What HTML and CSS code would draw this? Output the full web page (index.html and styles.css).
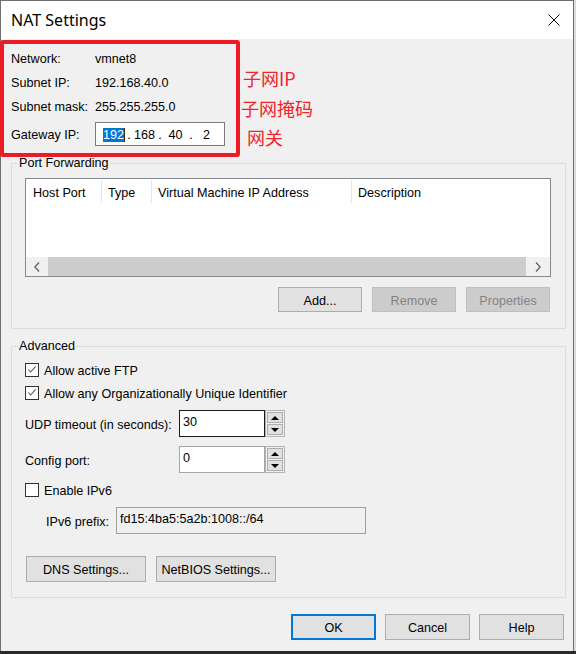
FILE: index.html
```html
<!DOCTYPE html>
<html lang="en">
<head>
<meta charset="utf-8">
<title>NAT Settings</title>
<link rel="stylesheet" href="styles.css">
</head>
<body>
<div class="window">
  <div class="titlebar">
    <span class="title">NAT Settings</span>
    <svg class="close" width="12" height="12" viewBox="0 0 12 12"><path d="M0.5 0.5L11.5 11.5M11.5 0.5L0.5 11.5" stroke="#000" stroke-width="1" fill="none"/></svg>
  </div>
  <div class="content">
    <div class="info">
      <div class="info-row"><span class="info-label">Network:</span><span class="info-value">vmnet8</span></div>
      <div class="info-row"><span class="info-label">Subnet IP:</span><span class="info-value">192.168.40.0</span></div>
      <div class="info-row"><span class="info-label">Subnet mask:</span><span class="info-value">255.255.255.0</span></div>
      <div class="info-row gateway"><span class="info-label">Gateway IP:</span>
        <div class="ipbox">
          <span class="octet"><span class="sel">192</span></span><span class="dot">.</span>
          <span class="octet">168</span><span class="dot">.</span>
          <span class="octet">40</span><span class="dot">.</span>
          <span class="octet">2</span>
        </div>
      </div>
    </div>

    <fieldset class="group pf">
      <legend>Port Forwarding</legend>
      <div class="listview">
        <div class="lv-header">
          <div class="col c1">Host Port</div>
          <div class="col c2">Type</div>
          <div class="col c3">Virtual Machine IP Address</div>
          <div class="col c4">Description</div>
        </div>
        <div class="lv-body"></div>
        <div class="hscroll">
          <span class="arrow left"><svg width="6" height="10" viewBox="0 0 6 10"><path d="M5 0.5L0.8 5L5 9.5" stroke="#606060" stroke-width="1.3" fill="none"/></svg></span>
          <span class="thumb"></span>
          <span class="arrow right"><svg width="6" height="10" viewBox="0 0 6 10"><path d="M1 0.5L5.2 5L1 9.5" stroke="#606060" stroke-width="1.3" fill="none"/></svg></span>
        </div>
      </div>
      <div class="btn-row">
        <button class="btn pf-btn">Add...</button>
        <button class="btn pf-btn" disabled>Remove</button>
        <button class="btn pf-btn" disabled>Properties</button>
      </div>
    </fieldset>

    <fieldset class="group adv">
      <legend>Advanced</legend>
      <div class="check-row">
        <span class="cb"><svg width="13" height="13" viewBox="0 0 13 13"><path d="M2.5 6.5L5 9.2L10.5 3.2" stroke="#555" stroke-width="1.1" fill="none"/></svg></span>
        <span class="cb-label">Allow active FTP</span>
      </div>
      <div class="check-row">
        <span class="cb"><svg width="13" height="13" viewBox="0 0 13 13"><path d="M2.5 6.5L5 9.2L10.5 3.2" stroke="#555" stroke-width="1.1" fill="none"/></svg></span>
        <span class="cb-label">Allow any Organizationally Unique Identifier</span>
      </div>
      <div class="spin-row udp">
        <span class="spin-label">UDP timeout (in seconds):</span>
        <span class="spin-input focused">30</span>
        <span class="spin-btns"><span class="sb up"></span><span class="sb down"></span></span>
      </div>
      <div class="spin-row cfg">
        <span class="spin-label">Config port:</span>
        <span class="spin-input">0</span>
        <span class="spin-btns"><span class="sb up"></span><span class="sb down"></span></span>
      </div>
      <div class="check-row ipv6">
        <span class="cb"></span>
        <span class="cb-label">Enable IPv6</span>
      </div>
      <div class="prefix-row">
        <span class="prefix-label">IPv6 prefix:</span>
        <span class="prefix-field">fd15:4ba5:5a2b:1008::/64</span>
      </div>
      <div class="adv-buttons">
        <button class="btn wide">DNS Settings...</button>
        <button class="btn wide">NetBIOS Settings...</button>
      </div>
    </fieldset>

    <div class="dialog-buttons">
      <button class="btn dlg default">OK</button>
      <button class="btn dlg">Cancel</button>
      <button class="btn dlg">Help</button>
    </div>
  </div>

  <div class="annot-box"></div>
  <div class="annot a1">子网IP</div>
  <div class="annot a2">子网掩码</div>
  <div class="annot a3">网关</div>
</div>
</body>
</html>
```

FILE: styles.css
```css
* { box-sizing: border-box; }

html, body { margin: 0; padding: 0; }

body {
  width: 576px;
  height: 654px;
  overflow: hidden;
  background: linear-gradient(to bottom, #dcdcdc 0, #dcdcdc 651px, #2a2a2a 651px);
  font-family: "Liberation Sans", Arial, sans-serif;
  font-size: 12.6px;
  color: #000;
}

.window {
  position: relative;
  width: 574px;
  height: 651px;
  border: 1px solid #6f6f6f;
  border-bottom: none;
  background: #f0f0f0;
}

.titlebar {
  height: 38px;
  background: #fff;
  display: flex;
  align-items: center;
  justify-content: space-between;
  padding: 0 13px 1px 10px;
}

.title {
  font-family: "Noto Sans", "Liberation Sans", sans-serif;
  font-size: 16px;
  line-height: 20px;
}

.close { display: block; }

.content {
  padding: 7px 0 0 10px;
}

/* info block */
.info-row {
  display: flex;
  align-items: center;
  height: 24px;
}
.info-label { width: 84px; padding-top: 2px; }
.info-value { padding-top: 2px; }
.gateway { margin-top: 4px; }

.ipbox {
  width: 130px;
  height: 24px;
  border: 1px solid #7a7a7a;
  background: #fff;
  display: flex;
  align-items: center;
  padding-left: 4px;
  padding-top: 1px;
}
.octet {
  width: 27px;
  display: flex;
  justify-content: center;
}
.dot {
  width: 4px;
  display: flex;
  justify-content: center;
}
.sel {
  background: #0078d7;
  color: #fff;
  line-height: 14px;
  box-shadow: 1px 0 0 #3a2a10;
}

/* group boxes */
.group {
  margin: 10px 0 0 0;
  width: 555px;
  min-width: 0;
  border: 1px solid #dcdcdc;
  padding: 7px 14px 16px 13px;
}
.group legend {
  margin-left: -7px;
  padding: 0 1px;
  line-height: 15px;
}

.listview {
  width: 526px;
  height: 99px;
  border: 1px solid #828790;
  background: #fff;
  display: flex;
  flex-direction: column;
}
.lv-header {
  display: flex;
  height: 24px;
  padding-top: 1px;
}
.col {
  display: flex;
  align-items: center;
  border-right: 1px solid #e5e5e5;
  padding-left: 6px;
  padding-top: 2px;
}
.c1 { width: 76px; padding-left: 7px; }
.c2 { width: 50px; }
.c3 { width: 200px; }
.c4 { flex: 1; border-right: none; }
.lv-body { flex: 1; }

.hscroll {
  height: 19px;
  display: flex;
  background: #f0f0f0;
}
.arrow {
  width: 22px;
  display: flex;
  align-items: center;
  justify-content: center;
}
.arrow.right { width: 24px; }
.thumb {
  flex: 1;
  background: #cdcdcd;
}

.btn {
  font-family: inherit;
  font-size: inherit;
  color: #000;
  background: #e1e1e1;
  border: 1px solid #adadad;
  padding: 2px 0 0 0;
  margin: 0;
  display: flex;
  align-items: center;
  justify-content: center;
}
.btn:disabled {
  background: #cccccc;
  border-color: #bfbfbf;
  color: #838383;
}

.btn-row {
  display: flex;
  justify-content: flex-end;
  gap: 10px;
  margin-top: 10px;
  padding-right: 1px;
}
.pf-btn { width: 84px; height: 25px; }

/* advanced */
.adv { padding-top: 4px; padding-bottom: 15px; }

.check-row {
  display: flex;
  align-items: center;
  height: 23px;
}
.cb {
  width: 14px;
  height: 14px;
  border: 1px solid #333;
  background: #fff;
  margin-right: 5px;
  display: flex;
  align-items: center;
  justify-content: center;
}
.cb svg { display: block; }
.cb-label { padding-top: 2px; }

.spin-row {
  display: flex;
  align-items: center;
  height: 27px;
}
.udp { margin-top: 6px; }
.cfg { margin-top: 9px; }
.ipv6 { margin-top: 5px; }

.spin-label { width: 154px; padding-top: 2px; }
.spin-input {
  width: 86px;
  height: 27px;
  border: 1px solid #a6a6a6;
  background: #fff;
  padding: 4px 0 0 3px;
  line-height: 15px;
}
.spin-input.focused { border-color: #1a1a1a; }

.spin-btns {
  width: 20px;
  height: 27px;
  border: 1px solid #b4b4b4;
  background: #f0f0f0;
  padding: 1px;
  display: flex;
  flex-direction: column;
  gap: 1px;
}
.sb {
  flex: 1;
  background: #e1e1e1;
  border: 1px solid #adadad;
  display: flex;
  align-items: center;
  justify-content: center;
}
.sb::after {
  content: "";
  width: 0;
  height: 0;
  border-left: 4px solid transparent;
  border-right: 4px solid transparent;
}
.sb.up::after { border-bottom: 4px solid #000; }
.sb.down::after { border-top: 4px solid #000; }

.prefix-row {
  display: flex;
  align-items: center;
  height: 27px;
  margin-top: 6px;
  padding-left: 21px;
}
.prefix-label { width: 70px; padding-top: 2px; }
.prefix-field {
  width: 250px;
  height: 27px;
  border: 1px solid #a0a0a0;
  background: #f0f0f0;
  padding: 4px 0 0 3px;
  line-height: 15px;
}

.adv-buttons {
  display: flex;
  gap: 10px;
  margin-top: 22px;
  padding-left: 1px;
}
.wide { width: 120px; height: 26px; }

.dialog-buttons {
  display: flex;
  justify-content: flex-end;
  gap: 9px;
  margin-top: 16px;
  padding-right: 9px;
}
.dlg { width: 85px; height: 26px; }
.dlg.default { border: 2px solid #0078d7; }

/* red annotations overlaid on the dialog */
.annot-box {
  position: absolute;
  left: -1px;
  top: 39px;
  width: 240px;
  height: 117px;
  border: 4px solid #ec1c24;
  border-radius: 3px;
}
.annot {
  position: absolute;
  font-family: "Noto Sans CJK SC", "Noto Sans", sans-serif;
  font-size: 18px;
  line-height: 20px;
  color: #f0232b;
}
.a1 { left: 242px; top: 67px; }
.a2 { left: 240px; top: 97px; }
.a3 { left: 246px; top: 126px; }
```
